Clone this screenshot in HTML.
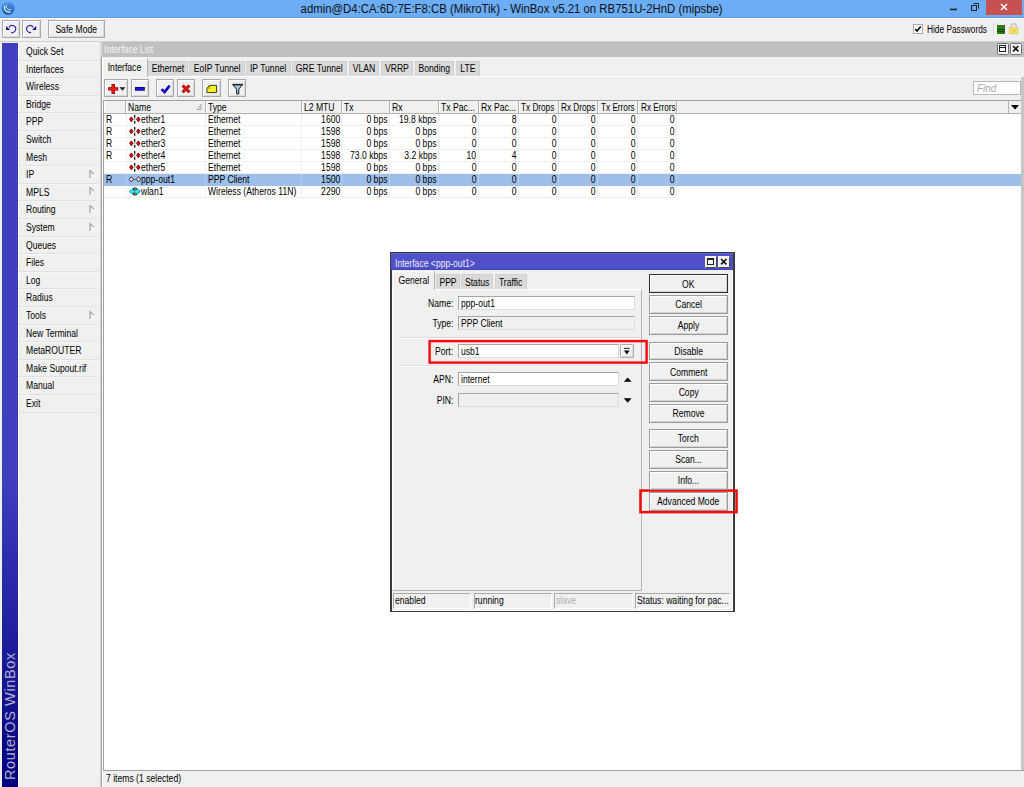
<!DOCTYPE html>
<html><head><meta charset="utf-8">
<style>
*{box-sizing:border-box;margin:0;padding:0}
html,body{width:1024px;height:787px;overflow:hidden;background:#f0f0f0;font-family:"Liberation Sans",sans-serif;font-size:10px;color:#000}
.a{position:absolute}
.x{display:inline-block;transform:scaleX(0.86);white-space:nowrap}
.t{position:absolute;white-space:nowrap;line-height:12px;height:12px;display:flex}
.t.c{justify-content:center}.t.r{justify-content:flex-end}
.btn{position:absolute;background:#f0f0f0;border:1px solid #a9a9a9;box-shadow:inset 1px 1px 0 #fff, inset -1px -1px 0 #d9d9d9;display:flex;justify-content:center;align-items:center;white-space:nowrap}
.dbtn{position:absolute;left:649.2px;width:78.8px;height:18.5px;padding-top:1px;background:#f0f0f0;border:1px solid #9a9a9a;box-shadow:inset 1px 1px 0 #fff, inset -1px -1px 0 #d2d2d2;display:flex;justify-content:center;align-items:center;white-space:nowrap}
.mi{position:absolute;left:19px;width:80px;height:17.6px;border-bottom:1px solid #e0e0e0;border-top:1px solid #f6f6f6;padding-left:6.5px;line-height:16.5px;white-space:nowrap}
.arr{position:absolute;left:69px;top:2.5px}
.tab{position:absolute;top:60.6px;height:15.4px;background:#dadada;border:1px solid #cecece;border-left-color:#d4d4d4;border-bottom:none;display:flex;justify-content:center;line-height:14.4px;white-space:nowrap}
.tab.act{top:58px;height:19px;background:#f0f0f0;border-color:#fafafa #b4b4b4 #f0f0f0 #fafafa;padding-right:2px;line-height:17.5px;z-index:2}
.hc{position:absolute;top:101px;height:12px;border-right:1px solid #b4b4b4;border-left:1px solid #fff;line-height:14px;padding-left:1.5px;white-space:nowrap;overflow:hidden;background:#f0f0f0}
.row{position:absolute;left:104px;width:917px;height:12px}
.c{position:absolute;top:0;height:12px;line-height:12.8px;white-space:nowrap;display:flex}
.c.r{justify-content:flex-end}
.inp{position:absolute;height:14px;background:#fff;border:1px solid #a6a6a6;border-right-color:#dcdcdc;border-bottom-color:#dcdcdc;line-height:14px;padding-left:2px;white-space:nowrap}
.inp.dis{background:#f0f0f0}
.sb{position:absolute;top:593px;height:16px;border:1px solid #aaa;border-right-color:#fff;border-bottom-color:#fff;line-height:14px;padding-left:0.5px;white-space:nowrap;overflow:hidden}
</style></head><body>
<div class="a" style="left:0;top:0;width:1024px;height:18px;background:#6badf6"></div>
<div class="t c" style="left:0;top:2px;width:1024px;font-size:12px;line-height:15px;height:15px;color:#101010"><span class="x" style="transform-origin:50% 50%;transform:scaleX(0.948);">admin@D4:CA:6D:7E:F8:CB (MikroTik) - WinBox v5.21 on RB751U-2HnD (mipsbe)</span></div>
<div class="a" style="left:986px;top:0;width:36px;height:15px;background:#c75050"></div>
<svg class="a" style="left:0;top:0" width="1024" height="18" viewBox="0 0 1024 18">
<defs><linearGradient id="lg" x1="0" y1="0" x2="0" y2="1"><stop offset="0" stop-color="#4f9ce4"/><stop offset="0.55" stop-color="#2c74c4"/><stop offset="1" stop-color="#1654a4"/></linearGradient></defs>
<circle cx="8.1" cy="8.4" r="6.4" fill="url(#lg)"/>
<path d="M4.4 6.2a4.8 4.8 0 0 0 6.3 5.6" fill="none" stroke="#fff" stroke-width="1.1"/><path d="M6 4.9a4 4 0 0 0 5.4 4.6" fill="none" stroke="#e4effa" stroke-width="0.9"/>
<rect x="950" y="8.7" width="7" height="1.5" fill="#1a1a1a"/>
<path d="M973.5 3.5h5v5" fill="none" stroke="#222" stroke-width="1"/><rect x="971.5" y="5.5" width="5" height="5" fill="none" stroke="#222" stroke-width="1"/>
<path d="M1001 4l6 6M1007 4l-6 6" stroke="#fff" stroke-width="1.5"/>
</svg>
<div class="a" style="left:0;top:17px;width:1024px;height:1px;background:#5e9ee6"></div>
<div class="a" style="left:0;top:18px;width:1024px;height:1px;background:#fafafa"></div>
<div class="a" style="left:0;top:40.5px;width:1024px;height:1.2px;background:#d0d0d0"></div>
<div class="btn" style="left:2px;top:20.2px;width:18px;height:18px"></div>
<div class="btn" style="left:22px;top:20.2px;width:19px;height:18px"></div>
<svg class="a" style="left:0;top:18px" width="48" height="24" viewBox="0 18 48 24"><path d="M6.1 26.1v3.9h4z" fill="#10108c"/><path d="M9 27.6A3.5 3.5 0 1 1 11.2 32.4" fill="none" stroke="#2424a0" stroke-width="1.1"/><path d="M36.2 26.1v3.9h-4z" fill="#10108c"/><path d="M33.3 27.6A3.5 3.5 0 1 0 31.1 32.4" fill="none" stroke="#2424a0" stroke-width="1.1"/></svg>
<div class="btn" style="left:48px;top:20.2px;width:57px;height:18px"><span class="x" style="transform-origin:50% 50%;">Safe Mode</span></div>
<div class="a" style="left:913px;top:24px;width:10px;height:10px;background:#fff;border:1px solid #a8a8a8"></div>
<svg class="a" style="left:913px;top:24px" width="10" height="10" viewBox="0 0 10 10"><path d="M2.2 5l1.8 2 3.8-4.4" fill="none" stroke="#000" stroke-width="1.5"/></svg>
<div class="t" style="left:927px;top:24px"><span class="x" style="transform-origin:0 50%;transform:scaleX(0.83);">Hide Passwords</span></div>
<div class="a" style="left:993px;top:23px;width:1px;height:12px;background:#dcdcdc"></div>
<div class="a" style="left:997px;top:25px;width:8px;height:9px;background:repeating-linear-gradient(#2a7a1a 0,#2a7a1a 1.6px,#145008 1.6px,#145008 2.4px)"></div>
<svg class="a" style="left:1008px;top:22px" width="12" height="13" viewBox="0 0 12 13"><path d="M3.2 6V4.2a2.5 2.5 0 0 1 5 0V6" fill="none" stroke="#c4c4c4" stroke-width="1.4"/><rect x="1.6" y="5.8" width="8.2" height="6" fill="#f6ea6a" stroke="#d8cc60" stroke-width="0.8"/><path d="M4.2 7v3.6M5.9 7v3.6M7.6 7v3.6" stroke="#f0b040" stroke-width="0.7"/></svg>
<div class="a" style="left:2px;top:42.5px;width:16px;height:744.5px;background:linear-gradient(#4040c0 0,#3e3ebe 58%,#000080 100%)"></div>
<div class="a" style="left:18px;top:42px;width:1px;height:745px;background:#fff"></div>
<div class="a" style="left:100px;top:42px;width:1px;height:745px;background:#d4d4d4"></div>
<div class="a" style="left:101px;top:42px;width:1px;height:15px;background:#dcdcdc"></div>
<div class="a" style="left:101px;top:57px;width:1px;height:730px;background:#a2a2a2"></div>
<div class="a" style="left:102px;top:57px;width:1px;height:730px;background:#fff"></div>
<div class="mi" style="top:43.00px"><span class="x" style="transform-origin:0 50%;">Quick Set</span></div>
<div class="mi" style="top:60.60px"><span class="x" style="transform-origin:0 50%;">Interfaces</span></div>
<div class="mi" style="top:78.20px"><span class="x" style="transform-origin:0 50%;">Wireless</span></div>
<div class="mi" style="top:95.80px"><span class="x" style="transform-origin:0 50%;">Bridge</span></div>
<div class="mi" style="top:113.40px"><span class="x" style="transform-origin:0 50%;">PPP</span></div>
<div class="mi" style="top:131.00px"><span class="x" style="transform-origin:0 50%;">Switch</span></div>
<div class="mi" style="top:148.60px"><span class="x" style="transform-origin:0 50%;">Mesh</span></div>
<div class="mi" style="top:166.20px"><span class="x" style="transform-origin:0 50%;">IP</span><svg class="arr" width="7" height="10" viewBox="0 0 7 10"><path d="M2 0.3v7.8" stroke="#9a9a9a" stroke-width="1.1"/><path d="M2.2 0.6l3.4 3.4" stroke="#6a6a6a" stroke-width="0.9"/><path d="M3 8.2l3-3.6" stroke="#fff" stroke-width="0.9"/></svg></div>
<div class="mi" style="top:183.80px"><span class="x" style="transform-origin:0 50%;">MPLS</span><svg class="arr" width="7" height="10" viewBox="0 0 7 10"><path d="M2 0.3v7.8" stroke="#9a9a9a" stroke-width="1.1"/><path d="M2.2 0.6l3.4 3.4" stroke="#6a6a6a" stroke-width="0.9"/><path d="M3 8.2l3-3.6" stroke="#fff" stroke-width="0.9"/></svg></div>
<div class="mi" style="top:201.40px"><span class="x" style="transform-origin:0 50%;">Routing</span><svg class="arr" width="7" height="10" viewBox="0 0 7 10"><path d="M2 0.3v7.8" stroke="#9a9a9a" stroke-width="1.1"/><path d="M2.2 0.6l3.4 3.4" stroke="#6a6a6a" stroke-width="0.9"/><path d="M3 8.2l3-3.6" stroke="#fff" stroke-width="0.9"/></svg></div>
<div class="mi" style="top:219.00px"><span class="x" style="transform-origin:0 50%;">System</span><svg class="arr" width="7" height="10" viewBox="0 0 7 10"><path d="M2 0.3v7.8" stroke="#9a9a9a" stroke-width="1.1"/><path d="M2.2 0.6l3.4 3.4" stroke="#6a6a6a" stroke-width="0.9"/><path d="M3 8.2l3-3.6" stroke="#fff" stroke-width="0.9"/></svg></div>
<div class="mi" style="top:236.60px"><span class="x" style="transform-origin:0 50%;">Queues</span></div>
<div class="mi" style="top:254.20px"><span class="x" style="transform-origin:0 50%;">Files</span></div>
<div class="mi" style="top:271.80px"><span class="x" style="transform-origin:0 50%;">Log</span></div>
<div class="mi" style="top:289.40px"><span class="x" style="transform-origin:0 50%;">Radius</span></div>
<div class="mi" style="top:307.00px"><span class="x" style="transform-origin:0 50%;">Tools</span><svg class="arr" width="7" height="10" viewBox="0 0 7 10"><path d="M2 0.3v7.8" stroke="#9a9a9a" stroke-width="1.1"/><path d="M2.2 0.6l3.4 3.4" stroke="#6a6a6a" stroke-width="0.9"/><path d="M3 8.2l3-3.6" stroke="#fff" stroke-width="0.9"/></svg></div>
<div class="mi" style="top:324.60px"><span class="x" style="transform-origin:0 50%;">New Terminal</span></div>
<div class="mi" style="top:342.20px"><span class="x" style="transform-origin:0 50%;">MetaROUTER</span></div>
<div class="mi" style="top:359.80px"><span class="x" style="transform-origin:0 50%;">Make Supout.rif</span></div>
<div class="mi" style="top:377.40px"><span class="x" style="transform-origin:0 50%;">Manual</span></div>
<div class="mi" style="top:395.00px"><span class="x" style="transform-origin:0 50%;">Exit</span></div>
<div class="a" style="left:2px;top:787px;width:140px;height:16px;transform-origin:0 0;transform:rotate(-90deg);color:#b4b4c8;font-size:14.5px;line-height:16px;white-space:nowrap;padding-left:7px;letter-spacing:0.62px">RouterOS WinBox</div>
<div class="a" style="left:102px;top:42px;width:922px;height:15px;background:#c0c0c0"></div>
<div class="t" style="left:104px;top:44px;color:#f6f6f6"><span class="x" style="transform-origin:0 50%;">Interface List</span></div>
<svg class="a" style="left:997px;top:42.6px" width="12" height="12" viewBox="0 0 12 12"><rect x="0.5" y="0.5" width="11" height="11" rx="1" fill="#f4f4f4" stroke="#707070"/><rect x="2.5" y="2.5" width="6" height="6" fill="none" stroke="#222"/><path d="M2.5 4.5h6" stroke="#222"/></svg>
<svg class="a" style="left:1010px;top:42.6px" width="12" height="12" viewBox="0 0 12 12"><rect x="0.5" y="0.5" width="11" height="11" rx="1" fill="#f4f4f4" stroke="#707070"/><path d="M3 3l5.4 5.4M8.4 3L3 8.4" stroke="#111" stroke-width="1.6"/></svg>
<div class="a" style="left:102px;top:57px;width:1px;height:730px;background:#fff"></div>
<div class="a" style="left:103px;top:76px;width:919px;height:1px;background:#fff"></div>
<div class="tab act" style="left:103px;width:44.5px"><span class="x" style="transform-origin:50% 50%;">Interface</span></div>
<div class="tab" style="left:148px;width:39.5px"><span class="x" style="transform-origin:50% 50%;">Ethernet</span></div>
<div class="tab" style="left:189px;width:55.5px"><span class="x" style="transform-origin:50% 50%;">EoIP Tunnel</span></div>
<div class="tab" style="left:246px;width:44.5px"><span class="x" style="transform-origin:50% 50%;">IP Tunnel</span></div>
<div class="tab" style="left:291.7px;width:55.80000000000001px"><span class="x" style="transform-origin:50% 50%;">GRE Tunnel</span></div>
<div class="tab" style="left:348.8px;width:30.399999999999977px"><span class="x" style="transform-origin:50% 50%;">VLAN</span></div>
<div class="tab" style="left:380.5px;width:32.89999999999998px"><span class="x" style="transform-origin:50% 50%;">VRRP</span></div>
<div class="tab" style="left:414.8px;width:39.0px"><span class="x" style="transform-origin:50% 50%;">Bonding</span></div>
<div class="tab" style="left:455.6px;width:24.399999999999977px"><span class="x" style="transform-origin:50% 50%;">LTE</span></div>
<div class="btn" style="left:103.5px;top:79px;width:24px;height:18.4px"></div>
<div class="btn" style="left:130.5px;top:79px;width:18px;height:18.4px"></div>
<div class="btn" style="left:156px;top:79px;width:18px;height:18.4px"></div>
<div class="btn" style="left:177px;top:79px;width:18px;height:18.4px"></div>
<div class="btn" style="left:202px;top:79px;width:18.5px;height:18.4px"></div>
<div class="btn" style="left:228px;top:79px;width:18px;height:18.4px"></div>
<svg class="a" style="left:100px;top:76px" width="150" height="24" viewBox="100 76 150 24">
<path d="M113.2 83.9v10M108.2 88.9h10" stroke="#7c0000" stroke-width="3.4"/><path d="M113.2 84.6v8.6M108.9 88.9h8.6" stroke="#ff1414" stroke-width="2"/>
<path d="M119.6 87.3h5.7l-2.85 3.5z" fill="#111"/>
<rect x="135" y="87" width="9.8" height="3.7" fill="#00007c"/><rect x="135.7" y="87.8" width="8.4" height="2.1" fill="#1414e4"/>
<path d="M161.6 89.2l3 2.8 5-6.4" fill="none" stroke="#0a0ac8" stroke-width="2.6"/>
<path d="M182.6 85.5l6.8 6.8M189.4 85.5l-6.8 6.8" stroke="#7c0000" stroke-width="3"/><path d="M183 85.9l6 6M189 85.9l-6 6" stroke="#f21414" stroke-width="1.7"/>
<path d="M206.9 88.3l2.6-2.9h7.1v7.2h-9.7z" fill="#f6f020" stroke="#303010" stroke-width="0.9"/><path d="M207.2 88.3h2.3v-2.6" fill="none" stroke="#6a6a30" stroke-width="0.6"/>
<path d="M232.8 84.6h9.8l-3.8 4.6v4.8h-2.2v-4.8z" fill="#a8c4ec" stroke="#202020" stroke-width="1"/><path d="M232.6 84.6h10.2" stroke="#202020" stroke-width="1.5"/>
</svg>
<div class="a" style="left:973px;top:81px;width:48px;height:14px;background:#fff;border:1px solid #b8b8b8;line-height:12px;padding-left:3px;color:#a8a8a8;font-style:italic;font-size:10.5px"><span class="x" style="transform-origin:0 50%;transform:scaleX(0.95);">Find</span></div>
<div class="a" style="left:103px;top:100px;width:919px;height:671px;background:#fff;border-left:1px solid #a0a0a0;border-top:1px solid #a0a0a0"></div>
<div class="a" style="left:104px;top:101px;width:917px;height:13px;background:#f0f0f0;border-bottom:1px solid #b4b4b4"></div>
<div class="hc" style="left:104px;width:21.5px"><span class="x" style="transform-origin:0 50%;"></span></div>
<div class="hc" style="left:125.5px;width:80.0px"><span class="x" style="transform-origin:0 50%;">Name</span></div>
<div class="hc" style="left:205.5px;width:96.0px"><span class="x" style="transform-origin:0 50%;">Type</span></div>
<div class="hc" style="left:301.5px;width:40.0px"><span class="x" style="transform-origin:0 50%;">L2 MTU</span></div>
<div class="hc" style="left:341.5px;width:48.0px"><span class="x" style="transform-origin:0 50%;">Tx</span></div>
<div class="hc" style="left:389.5px;width:49.0px"><span class="x" style="transform-origin:0 50%;">Rx</span></div>
<div class="hc" style="left:438.5px;width:40.0px"><span class="x" style="transform-origin:0 50%;">Tx Pac...</span></div>
<div class="hc" style="left:478.5px;width:40.0px"><span class="x" style="transform-origin:0 50%;">Rx Pac...</span></div>
<div class="hc" style="left:518.5px;width:40.0px"><span class="x" style="transform-origin:0 50%;transform:scaleX(0.82);">Tx Drops</span></div>
<div class="hc" style="left:558.5px;width:39.5px"><span class="x" style="transform-origin:0 50%;transform:scaleX(0.82);">Rx Drops</span></div>
<div class="hc" style="left:598px;width:40px"><span class="x" style="transform-origin:0 50%;transform:scaleX(0.82);">Tx Errors</span></div>
<div class="hc" style="left:638px;width:39px"><span class="x" style="transform-origin:0 50%;transform:scaleX(0.82);">Rx Errors</span></div>
<div class="hc" style="left:677px;width:332px;border-right:1px solid #b4b4b4"></div>
<svg class="a" style="left:1009px;top:101px" width="12" height="12" viewBox="0 0 12 12"><path d="M2 4h8l-4 4.5z" fill="#000"/></svg>
<svg class="a" style="left:196px;top:103px" width="8" height="8" viewBox="0 0 8 8"><path d="M1 6.5l4-5v5z" fill="none" stroke="#909090" stroke-width="0.8"/></svg>
<div class="row" style="top:114px;"><div class="c" style="left:0;width:22.5px;padding-left:2px;border-right:1px solid #f0f0f0;border-bottom:1px solid #f0f0f0;"><span class="x" style="transform-origin:0 50%;">R</span></div><div class="c" style="left:21.5px;width:80.0px;border-right:1px solid #f0f0f0;border-bottom:1px solid #f0f0f0;"><svg width="16" height="12" viewBox="0 0 16 12" style="position:absolute;left:0;top:0"><path d="M3.6 5.3l1.7-2.4 1.7 2.4-1.7 2.4z" fill="#f40000" stroke="#600000" stroke-width="0.9"/><path d="M10.6 5.3l1.7-2.4 1.7 2.4-1.7 2.4z" fill="#f40000" stroke="#600000" stroke-width="0.9"/><path d="M8.7 1v2.7M8.7 6.9v2.8" stroke="#000" stroke-width="1.2"/><path d="M8.7 4.3v2" stroke="#555" stroke-width="1.2" stroke-dasharray="0.7 0.6"/></svg><span style="margin-left:15.2px"><span class="x" style="transform-origin:0 50%;">ether1</span></span></div><div class="c" style="left:101.5px;width:96.0px;padding-left:2.5px;border-right:1px solid #f0f0f0;border-bottom:1px solid #f0f0f0;"><span class="x" style="transform-origin:0 50%;">Ethernet</span></div><div class="c r" style="left:197.5px;width:40.0px;padding-right:0px;border-right:1px solid #f0f0f0;border-bottom:1px solid #f0f0f0;"><span class="x" style="transform-origin:100% 50%;">1600</span></div><div class="c r" style="left:237.5px;width:48.0px;padding-right:1.2px;border-right:1px solid #f0f0f0;border-bottom:1px solid #f0f0f0;"><span class="x" style="transform-origin:100% 50%;">0 bps</span></div><div class="c r" style="left:285.5px;width:49.0px;padding-right:1.2px;border-right:1px solid #f0f0f0;border-bottom:1px solid #f0f0f0;"><span class="x" style="transform-origin:100% 50%;">19.8 kbps</span></div><div class="c r" style="left:334.5px;width:40.0px;padding-right:1.2px;border-right:1px solid #f0f0f0;border-bottom:1px solid #f0f0f0;"><span class="x" style="transform-origin:100% 50%;">0</span></div><div class="c r" style="left:374.5px;width:40.0px;padding-right:1.2px;border-right:1px solid #f0f0f0;border-bottom:1px solid #f0f0f0;"><span class="x" style="transform-origin:100% 50%;">8</span></div><div class="c r" style="left:414.5px;width:40.0px;padding-right:1.2px;border-right:1px solid #f0f0f0;border-bottom:1px solid #f0f0f0;"><span class="x" style="transform-origin:100% 50%;">0</span></div><div class="c r" style="left:454.5px;width:39.5px;padding-right:1.2px;border-right:1px solid #f0f0f0;border-bottom:1px solid #f0f0f0;"><span class="x" style="transform-origin:100% 50%;">0</span></div><div class="c r" style="left:494px;width:40px;padding-right:1.2px;border-right:1px solid #f0f0f0;border-bottom:1px solid #f0f0f0;"><span class="x" style="transform-origin:100% 50%;">0</span></div><div class="c r" style="left:534px;width:39px;padding-right:1.2px;border-right:1px solid #f0f0f0;border-bottom:1px solid #f0f0f0;"><span class="x" style="transform-origin:100% 50%;">0</span></div></div>
<div class="row" style="top:126px;"><div class="c" style="left:0;width:22.5px;padding-left:2px;border-right:1px solid #f0f0f0;border-bottom:1px solid #f0f0f0;"><span class="x" style="transform-origin:0 50%;">R</span></div><div class="c" style="left:21.5px;width:80.0px;border-right:1px solid #f0f0f0;border-bottom:1px solid #f0f0f0;"><svg width="16" height="12" viewBox="0 0 16 12" style="position:absolute;left:0;top:0"><path d="M3.6 5.3l1.7-2.4 1.7 2.4-1.7 2.4z" fill="#f40000" stroke="#600000" stroke-width="0.9"/><path d="M10.6 5.3l1.7-2.4 1.7 2.4-1.7 2.4z" fill="#f40000" stroke="#600000" stroke-width="0.9"/><path d="M8.7 1v2.7M8.7 6.9v2.8" stroke="#000" stroke-width="1.2"/><path d="M8.7 4.3v2" stroke="#555" stroke-width="1.2" stroke-dasharray="0.7 0.6"/></svg><span style="margin-left:15.2px"><span class="x" style="transform-origin:0 50%;">ether2</span></span></div><div class="c" style="left:101.5px;width:96.0px;padding-left:2.5px;border-right:1px solid #f0f0f0;border-bottom:1px solid #f0f0f0;"><span class="x" style="transform-origin:0 50%;">Ethernet</span></div><div class="c r" style="left:197.5px;width:40.0px;padding-right:0px;border-right:1px solid #f0f0f0;border-bottom:1px solid #f0f0f0;"><span class="x" style="transform-origin:100% 50%;">1598</span></div><div class="c r" style="left:237.5px;width:48.0px;padding-right:1.2px;border-right:1px solid #f0f0f0;border-bottom:1px solid #f0f0f0;"><span class="x" style="transform-origin:100% 50%;">0 bps</span></div><div class="c r" style="left:285.5px;width:49.0px;padding-right:1.2px;border-right:1px solid #f0f0f0;border-bottom:1px solid #f0f0f0;"><span class="x" style="transform-origin:100% 50%;">0 bps</span></div><div class="c r" style="left:334.5px;width:40.0px;padding-right:1.2px;border-right:1px solid #f0f0f0;border-bottom:1px solid #f0f0f0;"><span class="x" style="transform-origin:100% 50%;">0</span></div><div class="c r" style="left:374.5px;width:40.0px;padding-right:1.2px;border-right:1px solid #f0f0f0;border-bottom:1px solid #f0f0f0;"><span class="x" style="transform-origin:100% 50%;">0</span></div><div class="c r" style="left:414.5px;width:40.0px;padding-right:1.2px;border-right:1px solid #f0f0f0;border-bottom:1px solid #f0f0f0;"><span class="x" style="transform-origin:100% 50%;">0</span></div><div class="c r" style="left:454.5px;width:39.5px;padding-right:1.2px;border-right:1px solid #f0f0f0;border-bottom:1px solid #f0f0f0;"><span class="x" style="transform-origin:100% 50%;">0</span></div><div class="c r" style="left:494px;width:40px;padding-right:1.2px;border-right:1px solid #f0f0f0;border-bottom:1px solid #f0f0f0;"><span class="x" style="transform-origin:100% 50%;">0</span></div><div class="c r" style="left:534px;width:39px;padding-right:1.2px;border-right:1px solid #f0f0f0;border-bottom:1px solid #f0f0f0;"><span class="x" style="transform-origin:100% 50%;">0</span></div></div>
<div class="row" style="top:138px;"><div class="c" style="left:0;width:22.5px;padding-left:2px;border-right:1px solid #f0f0f0;border-bottom:1px solid #f0f0f0;"><span class="x" style="transform-origin:0 50%;">R</span></div><div class="c" style="left:21.5px;width:80.0px;border-right:1px solid #f0f0f0;border-bottom:1px solid #f0f0f0;"><svg width="16" height="12" viewBox="0 0 16 12" style="position:absolute;left:0;top:0"><path d="M3.6 5.3l1.7-2.4 1.7 2.4-1.7 2.4z" fill="#f40000" stroke="#600000" stroke-width="0.9"/><path d="M10.6 5.3l1.7-2.4 1.7 2.4-1.7 2.4z" fill="#f40000" stroke="#600000" stroke-width="0.9"/><path d="M8.7 1v2.7M8.7 6.9v2.8" stroke="#000" stroke-width="1.2"/><path d="M8.7 4.3v2" stroke="#555" stroke-width="1.2" stroke-dasharray="0.7 0.6"/></svg><span style="margin-left:15.2px"><span class="x" style="transform-origin:0 50%;">ether3</span></span></div><div class="c" style="left:101.5px;width:96.0px;padding-left:2.5px;border-right:1px solid #f0f0f0;border-bottom:1px solid #f0f0f0;"><span class="x" style="transform-origin:0 50%;">Ethernet</span></div><div class="c r" style="left:197.5px;width:40.0px;padding-right:0px;border-right:1px solid #f0f0f0;border-bottom:1px solid #f0f0f0;"><span class="x" style="transform-origin:100% 50%;">1598</span></div><div class="c r" style="left:237.5px;width:48.0px;padding-right:1.2px;border-right:1px solid #f0f0f0;border-bottom:1px solid #f0f0f0;"><span class="x" style="transform-origin:100% 50%;">0 bps</span></div><div class="c r" style="left:285.5px;width:49.0px;padding-right:1.2px;border-right:1px solid #f0f0f0;border-bottom:1px solid #f0f0f0;"><span class="x" style="transform-origin:100% 50%;">0 bps</span></div><div class="c r" style="left:334.5px;width:40.0px;padding-right:1.2px;border-right:1px solid #f0f0f0;border-bottom:1px solid #f0f0f0;"><span class="x" style="transform-origin:100% 50%;">0</span></div><div class="c r" style="left:374.5px;width:40.0px;padding-right:1.2px;border-right:1px solid #f0f0f0;border-bottom:1px solid #f0f0f0;"><span class="x" style="transform-origin:100% 50%;">0</span></div><div class="c r" style="left:414.5px;width:40.0px;padding-right:1.2px;border-right:1px solid #f0f0f0;border-bottom:1px solid #f0f0f0;"><span class="x" style="transform-origin:100% 50%;">0</span></div><div class="c r" style="left:454.5px;width:39.5px;padding-right:1.2px;border-right:1px solid #f0f0f0;border-bottom:1px solid #f0f0f0;"><span class="x" style="transform-origin:100% 50%;">0</span></div><div class="c r" style="left:494px;width:40px;padding-right:1.2px;border-right:1px solid #f0f0f0;border-bottom:1px solid #f0f0f0;"><span class="x" style="transform-origin:100% 50%;">0</span></div><div class="c r" style="left:534px;width:39px;padding-right:1.2px;border-right:1px solid #f0f0f0;border-bottom:1px solid #f0f0f0;"><span class="x" style="transform-origin:100% 50%;">0</span></div></div>
<div class="row" style="top:150px;"><div class="c" style="left:0;width:22.5px;padding-left:2px;border-right:1px solid #f0f0f0;border-bottom:1px solid #f0f0f0;"><span class="x" style="transform-origin:0 50%;">R</span></div><div class="c" style="left:21.5px;width:80.0px;border-right:1px solid #f0f0f0;border-bottom:1px solid #f0f0f0;"><svg width="16" height="12" viewBox="0 0 16 12" style="position:absolute;left:0;top:0"><path d="M3.6 5.3l1.7-2.4 1.7 2.4-1.7 2.4z" fill="#f40000" stroke="#600000" stroke-width="0.9"/><path d="M10.6 5.3l1.7-2.4 1.7 2.4-1.7 2.4z" fill="#f40000" stroke="#600000" stroke-width="0.9"/><path d="M8.7 1v2.7M8.7 6.9v2.8" stroke="#000" stroke-width="1.2"/><path d="M8.7 4.3v2" stroke="#555" stroke-width="1.2" stroke-dasharray="0.7 0.6"/></svg><span style="margin-left:15.2px"><span class="x" style="transform-origin:0 50%;">ether4</span></span></div><div class="c" style="left:101.5px;width:96.0px;padding-left:2.5px;border-right:1px solid #f0f0f0;border-bottom:1px solid #f0f0f0;"><span class="x" style="transform-origin:0 50%;">Ethernet</span></div><div class="c r" style="left:197.5px;width:40.0px;padding-right:0px;border-right:1px solid #f0f0f0;border-bottom:1px solid #f0f0f0;"><span class="x" style="transform-origin:100% 50%;">1598</span></div><div class="c r" style="left:237.5px;width:48.0px;padding-right:1.2px;border-right:1px solid #f0f0f0;border-bottom:1px solid #f0f0f0;"><span class="x" style="transform-origin:100% 50%;">73.0 kbps</span></div><div class="c r" style="left:285.5px;width:49.0px;padding-right:1.2px;border-right:1px solid #f0f0f0;border-bottom:1px solid #f0f0f0;"><span class="x" style="transform-origin:100% 50%;">3.2 kbps</span></div><div class="c r" style="left:334.5px;width:40.0px;padding-right:1.2px;border-right:1px solid #f0f0f0;border-bottom:1px solid #f0f0f0;"><span class="x" style="transform-origin:100% 50%;">10</span></div><div class="c r" style="left:374.5px;width:40.0px;padding-right:1.2px;border-right:1px solid #f0f0f0;border-bottom:1px solid #f0f0f0;"><span class="x" style="transform-origin:100% 50%;">4</span></div><div class="c r" style="left:414.5px;width:40.0px;padding-right:1.2px;border-right:1px solid #f0f0f0;border-bottom:1px solid #f0f0f0;"><span class="x" style="transform-origin:100% 50%;">0</span></div><div class="c r" style="left:454.5px;width:39.5px;padding-right:1.2px;border-right:1px solid #f0f0f0;border-bottom:1px solid #f0f0f0;"><span class="x" style="transform-origin:100% 50%;">0</span></div><div class="c r" style="left:494px;width:40px;padding-right:1.2px;border-right:1px solid #f0f0f0;border-bottom:1px solid #f0f0f0;"><span class="x" style="transform-origin:100% 50%;">0</span></div><div class="c r" style="left:534px;width:39px;padding-right:1.2px;border-right:1px solid #f0f0f0;border-bottom:1px solid #f0f0f0;"><span class="x" style="transform-origin:100% 50%;">0</span></div></div>
<div class="row" style="top:162px;"><div class="c" style="left:0;width:22.5px;padding-left:2px;border-right:1px solid #f0f0f0;border-bottom:1px solid #f0f0f0;"><span class="x" style="transform-origin:0 50%;"></span></div><div class="c" style="left:21.5px;width:80.0px;border-right:1px solid #f0f0f0;border-bottom:1px solid #f0f0f0;"><svg width="16" height="12" viewBox="0 0 16 12" style="position:absolute;left:0;top:0"><path d="M3.6 5.3l1.7-2.4 1.7 2.4-1.7 2.4z" fill="#f40000" stroke="#600000" stroke-width="0.9"/><path d="M10.6 5.3l1.7-2.4 1.7 2.4-1.7 2.4z" fill="#f40000" stroke="#600000" stroke-width="0.9"/><path d="M8.7 1v2.7M8.7 6.9v2.8" stroke="#000" stroke-width="1.2"/><path d="M8.7 4.3v2" stroke="#555" stroke-width="1.2" stroke-dasharray="0.7 0.6"/></svg><span style="margin-left:15.2px"><span class="x" style="transform-origin:0 50%;">ether5</span></span></div><div class="c" style="left:101.5px;width:96.0px;padding-left:2.5px;border-right:1px solid #f0f0f0;border-bottom:1px solid #f0f0f0;"><span class="x" style="transform-origin:0 50%;">Ethernet</span></div><div class="c r" style="left:197.5px;width:40.0px;padding-right:0px;border-right:1px solid #f0f0f0;border-bottom:1px solid #f0f0f0;"><span class="x" style="transform-origin:100% 50%;">1598</span></div><div class="c r" style="left:237.5px;width:48.0px;padding-right:1.2px;border-right:1px solid #f0f0f0;border-bottom:1px solid #f0f0f0;"><span class="x" style="transform-origin:100% 50%;">0 bps</span></div><div class="c r" style="left:285.5px;width:49.0px;padding-right:1.2px;border-right:1px solid #f0f0f0;border-bottom:1px solid #f0f0f0;"><span class="x" style="transform-origin:100% 50%;">0 bps</span></div><div class="c r" style="left:334.5px;width:40.0px;padding-right:1.2px;border-right:1px solid #f0f0f0;border-bottom:1px solid #f0f0f0;"><span class="x" style="transform-origin:100% 50%;">0</span></div><div class="c r" style="left:374.5px;width:40.0px;padding-right:1.2px;border-right:1px solid #f0f0f0;border-bottom:1px solid #f0f0f0;"><span class="x" style="transform-origin:100% 50%;">0</span></div><div class="c r" style="left:414.5px;width:40.0px;padding-right:1.2px;border-right:1px solid #f0f0f0;border-bottom:1px solid #f0f0f0;"><span class="x" style="transform-origin:100% 50%;">0</span></div><div class="c r" style="left:454.5px;width:39.5px;padding-right:1.2px;border-right:1px solid #f0f0f0;border-bottom:1px solid #f0f0f0;"><span class="x" style="transform-origin:100% 50%;">0</span></div><div class="c r" style="left:494px;width:40px;padding-right:1.2px;border-right:1px solid #f0f0f0;border-bottom:1px solid #f0f0f0;"><span class="x" style="transform-origin:100% 50%;">0</span></div><div class="c r" style="left:534px;width:39px;padding-right:1.2px;border-right:1px solid #f0f0f0;border-bottom:1px solid #f0f0f0;"><span class="x" style="transform-origin:100% 50%;">0</span></div></div>
<div class="row" style="top:174px;background:#9dbfea;"><div class="c" style="left:0;width:22.5px;padding-left:2px;border-right:1px solid #b4cdee;"><span class="x" style="transform-origin:0 50%;">R</span></div><div class="c" style="left:21.5px;width:80.0px;border-right:1px solid #b4cdee;"><svg width="16" height="12" viewBox="0 0 16 12" style="position:absolute;left:0;top:0"><path d="M3.2 5.3l2.1-2.7 2.1 2.7-2.1 2.7z" fill="#ecd8f8" stroke="#383838" stroke-width="1"/><path d="M10.4 5.3l2.1-2.7 2.1 2.7-2.1 2.7z" fill="#ecd8f8" stroke="#383838" stroke-width="1"/><circle cx="8.9" cy="5.4" r="0.7" fill="#303030"/></svg><span style="margin-left:15.2px"><span class="x" style="transform-origin:0 50%;">ppp-out1</span></span></div><div class="c" style="left:101.5px;width:96.0px;padding-left:2.5px;border-right:1px solid #b4cdee;"><span class="x" style="transform-origin:0 50%;">PPP Client</span></div><div class="c r" style="left:197.5px;width:40.0px;padding-right:0px;border-right:1px solid #b4cdee;"><span class="x" style="transform-origin:100% 50%;">1500</span></div><div class="c r" style="left:237.5px;width:48.0px;padding-right:1.2px;border-right:1px solid #b4cdee;"><span class="x" style="transform-origin:100% 50%;">0 bps</span></div><div class="c r" style="left:285.5px;width:49.0px;padding-right:1.2px;border-right:1px solid #b4cdee;"><span class="x" style="transform-origin:100% 50%;">0 bps</span></div><div class="c r" style="left:334.5px;width:40.0px;padding-right:1.2px;border-right:1px solid #b4cdee;"><span class="x" style="transform-origin:100% 50%;">0</span></div><div class="c r" style="left:374.5px;width:40.0px;padding-right:1.2px;border-right:1px solid #b4cdee;"><span class="x" style="transform-origin:100% 50%;">0</span></div><div class="c r" style="left:414.5px;width:40.0px;padding-right:1.2px;border-right:1px solid #b4cdee;"><span class="x" style="transform-origin:100% 50%;">0</span></div><div class="c r" style="left:454.5px;width:39.5px;padding-right:1.2px;border-right:1px solid #b4cdee;"><span class="x" style="transform-origin:100% 50%;">0</span></div><div class="c r" style="left:494px;width:40px;padding-right:1.2px;border-right:1px solid #b4cdee;"><span class="x" style="transform-origin:100% 50%;">0</span></div><div class="c r" style="left:534px;width:39px;padding-right:1.2px;border-right:1px solid #b4cdee;"><span class="x" style="transform-origin:100% 50%;">0</span></div></div>
<div class="row" style="top:186px;"><div class="c" style="left:0;width:22.5px;padding-left:2px;border-right:1px solid #f0f0f0;border-bottom:1px solid #f0f0f0;"><span class="x" style="transform-origin:0 50%;"></span></div><div class="c" style="left:21.5px;width:80.0px;border-right:1px solid #f0f0f0;border-bottom:1px solid #f0f0f0;"><svg width="16" height="12" viewBox="0 0 16 12" style="position:absolute;left:0;top:0"><path d="M3 5.5l5.6-4.6v9.2z" fill="#181818"/><path d="M14.7 5.5l-5.3-4.6v9.2z" fill="#181818"/><path d="M3.4 5.5l2.8-2.9 2.7 2.9-2.7 2.9z" fill="#10e4e4"/><path d="M8.6 5.5l2.7-2.9 2.8 2.9-2.8 2.9z" fill="#10e4e4"/><path d="M4.6 5.5h3M9.8 5.5h3" stroke="#a0ffff" stroke-width="0.8" stroke-dasharray="0.8 0.8"/></svg><span style="margin-left:15.2px"><span class="x" style="transform-origin:0 50%;">wlan1</span></span></div><div class="c" style="left:101.5px;width:96.0px;padding-left:2.5px;border-right:1px solid #f0f0f0;border-bottom:1px solid #f0f0f0;"><span class="x" style="transform-origin:0 50%;">Wireless (Atheros 11N)</span></div><div class="c r" style="left:197.5px;width:40.0px;padding-right:0px;border-right:1px solid #f0f0f0;border-bottom:1px solid #f0f0f0;"><span class="x" style="transform-origin:100% 50%;">2290</span></div><div class="c r" style="left:237.5px;width:48.0px;padding-right:1.2px;border-right:1px solid #f0f0f0;border-bottom:1px solid #f0f0f0;"><span class="x" style="transform-origin:100% 50%;">0 bps</span></div><div class="c r" style="left:285.5px;width:49.0px;padding-right:1.2px;border-right:1px solid #f0f0f0;border-bottom:1px solid #f0f0f0;"><span class="x" style="transform-origin:100% 50%;">0 bps</span></div><div class="c r" style="left:334.5px;width:40.0px;padding-right:1.2px;border-right:1px solid #f0f0f0;border-bottom:1px solid #f0f0f0;"><span class="x" style="transform-origin:100% 50%;">0</span></div><div class="c r" style="left:374.5px;width:40.0px;padding-right:1.2px;border-right:1px solid #f0f0f0;border-bottom:1px solid #f0f0f0;"><span class="x" style="transform-origin:100% 50%;">0</span></div><div class="c r" style="left:414.5px;width:40.0px;padding-right:1.2px;border-right:1px solid #f0f0f0;border-bottom:1px solid #f0f0f0;"><span class="x" style="transform-origin:100% 50%;">0</span></div><div class="c r" style="left:454.5px;width:39.5px;padding-right:1.2px;border-right:1px solid #f0f0f0;border-bottom:1px solid #f0f0f0;"><span class="x" style="transform-origin:100% 50%;">0</span></div><div class="c r" style="left:494px;width:40px;padding-right:1.2px;border-right:1px solid #f0f0f0;border-bottom:1px solid #f0f0f0;"><span class="x" style="transform-origin:100% 50%;">0</span></div><div class="c r" style="left:534px;width:39px;padding-right:1.2px;border-right:1px solid #f0f0f0;border-bottom:1px solid #f0f0f0;"><span class="x" style="transform-origin:100% 50%;">0</span></div></div>
<div class="a" style="left:1021.4px;top:77px;width:2.6px;height:694px;background:#c6c6c6"></div>
<div class="a" style="left:103px;top:770px;width:921px;height:17px;background:#f0f0f0;border-top:1px solid #a0a0a0"></div>
<div class="t" style="left:106px;top:773px"><span class="x" style="transform-origin:0 50%;">7 items (1 selected)</span></div>
<div class="a" style="left:390px;top:252px;width:345px;height:360px;background:#f0f0f0;border:1.6px solid #3c3c3c;border-right-width:2px;border-left-width:2px;box-shadow:inset -1px -1px 0 #fff"></div>
<div class="a" style="left:391px;top:253px;width:342px;height:17px;background:linear-gradient(#6868dc 0,#5050c8 1.5px,#5050c8 15px,#4040c4 17px)"></div>
<div class="t" style="left:395px;top:258px;color:#e8e8f8"><span class="x" style="transform-origin:0 50%;">Interface &lt;ppp-out1&gt;</span></div>
<svg class="a" style="left:705px;top:256px" width="12" height="12" viewBox="0 0 12 12"><rect x="0.5" y="0.5" width="11" height="11" fill="#f2f2f2" stroke="#f4f4f4"/><path d="M0.5 11.5h11v-11" fill="none" stroke="#4a4a4a"/><rect x="2.5" y="2.5" width="6" height="6" fill="none" stroke="#222"/><path d="M2.5 3.5h6" stroke="#222"/></svg>
<svg class="a" style="left:718px;top:256px" width="12" height="12" viewBox="0 0 12 12"><rect x="0.5" y="0.5" width="11" height="11" fill="#f2f2f2" stroke="#f4f4f4"/><path d="M0.5 11.5h11v-11" fill="none" stroke="#4a4a4a"/><path d="M3 3l5.4 5.4M8.4 3L3 8.4" stroke="#111" stroke-width="1.6"/></svg>
<div class="a" style="left:392px;top:289px;width:250px;height:302px;border:1px solid #b4b4b4;border-left-color:#fff;border-top-color:#fff"></div>
<div class="tab act" style="left:392.5px;width:42.5px;top:271px;height:19px;padding-right:0;padding-left:1px"><span class="x" style="transform-origin:50% 50%;">General</span></div>
<div class="tab" style="left:436px;width:23.5px;top:273.5px;height:15.5px;line-height:15.5px"><span class="x" style="transform-origin:50% 50%;">PPP</span></div>
<div class="tab" style="left:461px;width:32px;top:273.5px;height:15.5px;line-height:15.5px"><span class="x" style="transform-origin:50% 50%;">Status</span></div>
<div class="tab" style="left:495px;width:32px;top:273.5px;height:15.5px;line-height:15.5px"><span class="x" style="transform-origin:50% 50%;">Traffic</span></div>
<div class="t r" style="left:399px;width:54px;top:298px"><span class="x" style="transform-origin:100% 50%;">Name:</span></div>
<div class="inp" style="left:458px;top:296px;width:176.5px"><span class="x" style="transform-origin:0 50%;">ppp-out1</span></div>
<div class="t r" style="left:399px;width:54px;top:318px"><span class="x" style="transform-origin:100% 50%;">Type:</span></div>
<div class="inp dis" style="left:458px;top:316px;width:176.5px"><span class="x" style="transform-origin:0 50%;">PPP Client</span></div>
<div class="a" style="left:400px;top:337px;width:240px;height:2px;border-top:1px solid #e0e0e0;border-bottom:1px solid #fafafa"></div>
<div class="t r" style="left:399px;width:54px;top:346px"><span class="x" style="transform-origin:100% 50%;">Port:</span></div>
<div class="inp" style="left:458px;top:344px;width:161px"><span class="x" style="transform-origin:0 50%;">usb1</span></div>
<div class="btn" style="left:620px;top:344px;width:14px;height:14px;border-color:#b0b0b0"></div>
<svg class="a" style="left:620px;top:344px" width="14" height="14" viewBox="620 344 14 14"><path d="M624 348.4h5.6" stroke="#111" stroke-width="0.9"/><path d="M624 350.4h5.6l-2.8 4z" fill="#000"/></svg>
<div class="a" style="left:400px;top:365px;width:240px;height:2px;border-top:1px solid #e0e0e0;border-bottom:1px solid #fafafa"></div>
<div class="t r" style="left:399px;width:54px;top:374px"><span class="x" style="transform-origin:100% 50%;">APN:</span></div>
<div class="inp" style="left:458px;top:372px;width:161px"><span class="x" style="transform-origin:0 50%;">internet</span></div>
<svg class="a" style="left:622px;top:374px" width="11" height="10" viewBox="622 374 11 10"><path d="M623.8 381.7h7.8l-3.9-4.3z" fill="#000"/></svg>
<div class="t r" style="left:399px;width:54px;top:395px"><span class="x" style="transform-origin:100% 50%;">PIN:</span></div>
<div class="inp dis" style="left:458px;top:393px;width:161px"><span class="x" style="transform-origin:0 50%;"></span></div>
<svg class="a" style="left:622px;top:395px" width="11" height="10" viewBox="622 395 11 10"><path d="M623.8 398.3h7.8l-3.9 4.4z" fill="#000"/></svg>
<svg class="a" style="left:420px;top:335px" width="240" height="34" viewBox="420 335 240 34"><rect x="429.6" y="341.1" width="217" height="21.5" fill="none" stroke="#f80808" stroke-width="2.4"/></svg>
<svg class="a" style="left:630px;top:484px" width="120" height="36" viewBox="630 484 120 36"><rect x="640.45" y="490.55" width="96.1" height="21.6" fill="none" stroke="#f80808" stroke-width="2.5"/></svg>
<div class="dbtn" style="top:274.3px;border-color:#303030;"><span class="x" style="transform-origin:50% 50%;">OK</span></div>
<div class="dbtn" style="top:295.2px;"><span class="x" style="transform-origin:50% 50%;">Cancel</span></div>
<div class="dbtn" style="top:316.0px;"><span class="x" style="transform-origin:50% 50%;">Apply</span></div>
<div class="dbtn" style="top:341.5px;"><span class="x" style="transform-origin:50% 50%;">Disable</span></div>
<div class="dbtn" style="top:362.4px;"><span class="x" style="transform-origin:50% 50%;">Comment</span></div>
<div class="dbtn" style="top:383.2px;"><span class="x" style="transform-origin:50% 50%;">Copy</span></div>
<div class="dbtn" style="top:404.1px;"><span class="x" style="transform-origin:50% 50%;">Remove</span></div>
<div class="dbtn" style="top:429.2px;"><span class="x" style="transform-origin:50% 50%;">Torch</span></div>
<div class="dbtn" style="top:450.2px;"><span class="x" style="transform-origin:50% 50%;">Scan...</span></div>
<div class="dbtn" style="top:471.1px;"><span class="x" style="transform-origin:50% 50%;">Info...</span></div>
<div class="dbtn" style="top:492.0px;"><span class="x" style="transform-origin:50% 50%;">Advanced Mode</span></div>
<div class="sb" style="left:393px;width:78px;color:#000"><span class="x" style="transform-origin:0 50%;">enabled</span></div>
<div class="sb" style="left:473.5px;width:78.0px;color:#000"><span class="x" style="transform-origin:0 50%;">running</span></div>
<div class="sb" style="left:554px;width:78.5px;color:#b0b0b0"><span class="x" style="transform-origin:0 50%;">slave</span></div>
<div class="sb" style="left:635px;width:95px;color:#000"><span class="x" style="transform-origin:0 50%;">Status: waiting for pac...</span></div>
</body></html>
